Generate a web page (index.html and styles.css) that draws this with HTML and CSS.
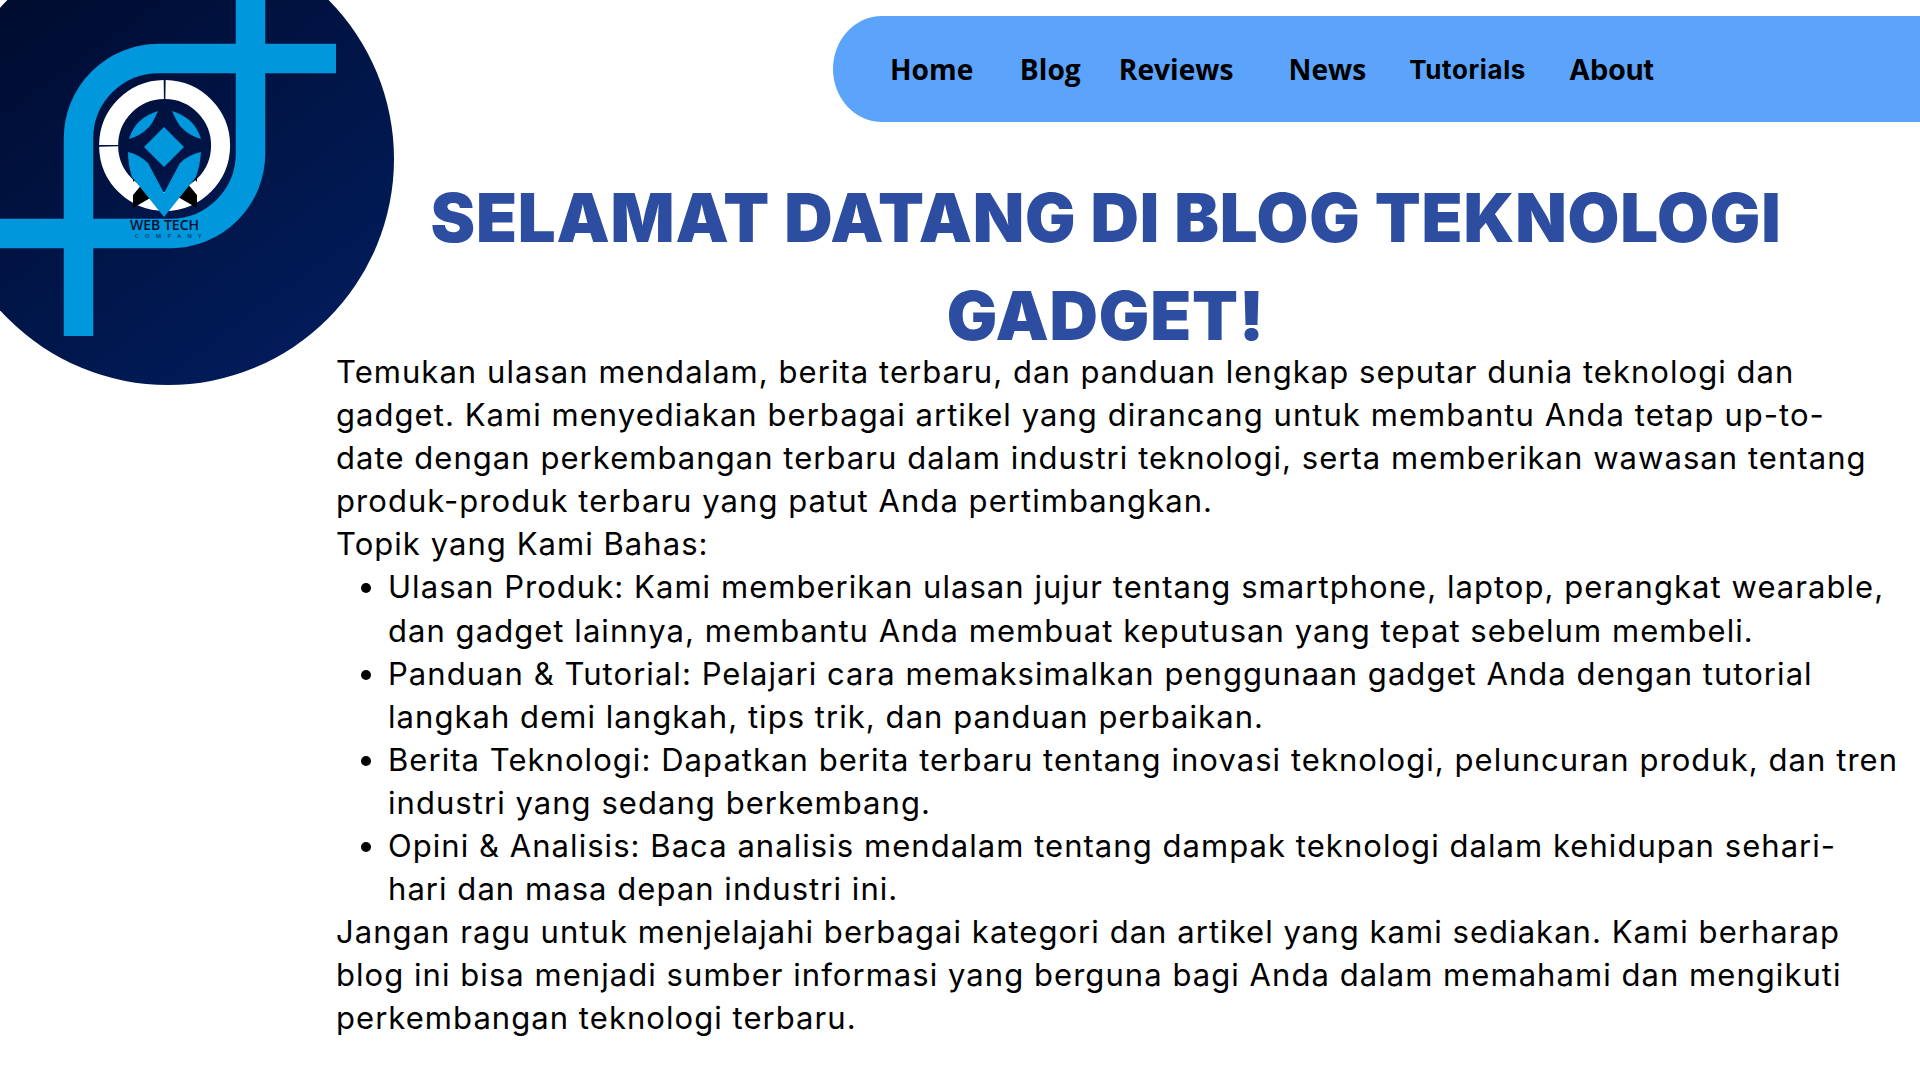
FILE: index.html
```html
<!DOCTYPE html>
<html lang="id">
<head>
    <meta charset="UTF-8">
    <meta name="viewport" content="width=device-width, initial-scale=1.0">
    <title>Blog Teknologi Gadget</title>
    <link rel="stylesheet" href="styles.css">
</head>
<body>
    <div class="logo">
        <svg width="452" height="452" viewBox="0 0 452 452" aria-label="Web Tech Company">
            <defs>
                <linearGradient id="bg" x1="0.1" y1="0.05" x2="0.75" y2="0.95">
                    <stop offset="0" stop-color="#000a2b"/>
                    <stop offset="1" stop-color="#011c5a"/>
                </linearGradient>
            </defs>
            <g transform="translate(58 67)">
                <circle cx="168" cy="159" r="226" fill="url(#bg)"/>
                <g fill="none" stroke="#0097dd" stroke-width="29.5">
                    <path d="M78.5 336V138.5A80 80 0 0 1 158.5 58.500H336"/>
                    <path d="M250.500 -67V153A80 80 0 0 1 170.500 233.500H-58"/>
                </g>
                <g fill="none" stroke="#fff" stroke-width="19">
                    <path d="M163.800 89.500A56 56 0 0 0 108.600 145"/>
                    <path d="M165.500 89.500A56 56 0 1 1 108.600 146.500"/>
                </g>
                <path fill="#000" d="M133 168l7 6-7 8zM197 168l-7 6 7 8zM133 208v-13l10-12 9 14zM197 208v-13l-10-12-9 14z"/>
                <g fill="#0097dd">
                    <path d="M164 127l20 20-20 20-20-20z"/>
                    <path d="M158 111q-6 14-10 17-8 8-19 11 6-21 29-28z"/>
                    <path d="M172 111q6 14 10 17 8 8 19 11-6-21-29-28z"/>
                    <path d="M128 152q12 3 20 11l16 30 16-30q8-8 21-11-1 14-5 25l-32 40-32-40q-4-12-4-25z"/>
                </g>
                <text class="logo-name" x="130" y="230">WEB TECH</text>
                <text class="logo-sub" x="135" y="238">COMPANY</text>
            </g>
        </svg>
    </div>

    <nav class="navbar">
        <a href="#" class="nav-home">Home</a>
        <a href="#" class="nav-blog">Blog</a>
        <a href="#" class="nav-reviews">Reviews</a>
        <a href="#" class="nav-news">News</a>
        <a href="#" class="nav-tutorials">Tutorials</a>
        <a href="#" class="nav-about">About</a>
    </nav>

    <main class="content">
        <h1>SELAMAT DATANG DI BLOG TEKNOLOGI<br>GADGET!</h1>
        <p>Temukan ulasan mendalam, berita terbaru, dan panduan lengkap seputar dunia teknologi dan<br>gadget. Kami menyediakan berbagai artikel yang dirancang untuk membantu Anda tetap up-to-<br>date dengan perkembangan terbaru dalam industri teknologi, serta memberikan wawasan tentang<br>produk-produk terbaru yang patut Anda pertimbangkan.</p>
        <p>Topik yang Kami Bahas:</p>
        <ul>
            <li>Ulasan Produk: Kami memberikan ulasan jujur tentang smartphone, laptop, perangkat wearable,<br>dan gadget lainnya, membantu Anda membuat keputusan yang tepat sebelum membeli.</li>
            <li>Panduan &amp; Tutorial: Pelajari cara memaksimalkan penggunaan gadget Anda dengan tutorial<br>langkah demi langkah, tips trik, dan panduan perbaikan.</li>
            <li>Berita Teknologi: Dapatkan berita terbaru tentang inovasi teknologi, peluncuran produk, dan tren<br>industri yang sedang berkembang.</li>
            <li>Opini &amp; Analisis: Baca analisis mendalam tentang dampak teknologi dalam kehidupan sehari-<br>hari dan masa depan industri ini.</li>
        </ul>
        <p>Jangan ragu untuk menjelajahi berbagai kategori dan artikel yang kami sediakan. Kami berharap<br>blog ini bisa menjadi sumber informasi yang berguna bagi Anda dalam memahami dan mengikuti<br>perkembangan teknologi terbaru.</p>
    </main>
</body>
</html>
```

FILE: styles.css
```css
body {
    margin: 0;
    background-color: #fff;
    color: #000;
    font-family: "Inter", "Noto Sans", sans-serif;
    overflow: hidden;
}
.logo {
    position: absolute;
    left: -58px;
    top: -67px;
}
.logo svg {
    display: block;
}
.logo-name {
    font-family: "Open Sans", sans-serif;
    font-size: 14px;
    font-weight: 600;
    fill: #04102e;
}
.logo-sub {
    font-family: "Open Sans", sans-serif;
    font-size: 6px;
    letter-spacing: 6.2px;
    fill: #04102e;
}
.navbar {
    display: flex;
    align-items: center;
    height: 106px;
    margin: 16px 0 0 833px;
    padding-left: 57px;
    background-color: #5ba3fb;
    border-radius: 49px 0 0 49px / 53px 0 0 53px;
}
.navbar a {
    color: #000;
    text-decoration: none;
    font-family: "Open Sans", sans-serif;
    font-size: 28.2px;
    font-weight: 700;
}
.navbar .nav-tutorials {
    font-family: "Inter", sans-serif;
    font-size: 26px;
    letter-spacing: 0.6px;
}
.navbar .nav-about {
    font-family: "Inter", sans-serif;
    font-size: 28.5px;
}
.nav-home { margin-right: 46.5px; }
.nav-blog { margin-right: 38px; }
.nav-reviews { margin-right: 55px; }
.nav-news { margin-right: 43px; }
.nav-tutorials { margin-right: 43px; }
.content {
    margin-left: 336px;
    width: 1540px;
}
h1 {
    margin: 47px 0 -15px;
    text-align: center;
    color: #2c4da0;
    font-size: 67px;
    font-weight: 900;
    letter-spacing: 0.8px;
    line-height: 98px;
}
p, li {
    font-size: 31px;
    letter-spacing: 1.05px;
    line-height: 43.1px;
    white-space: nowrap;
}
p {
    margin: 0;
}
ul {
    margin: 0;
    padding-left: 52px;
}
```
